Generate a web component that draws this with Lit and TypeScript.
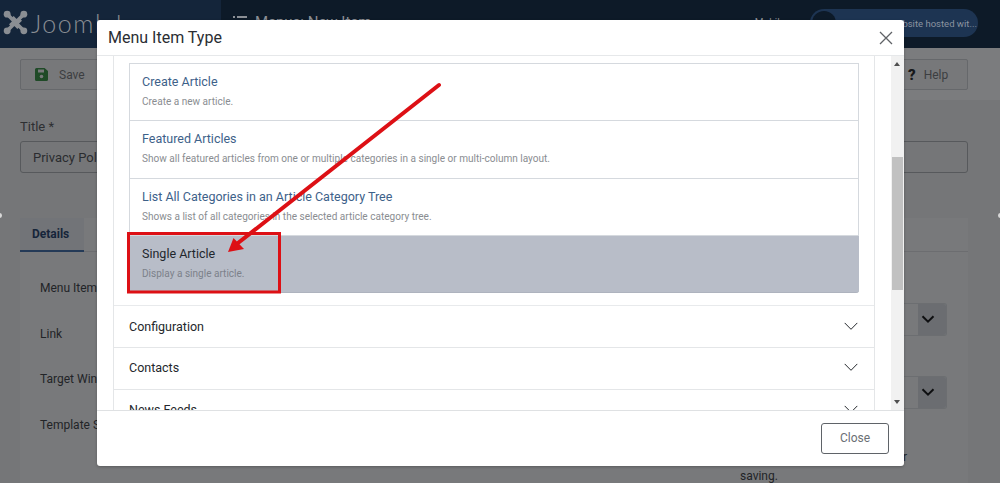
import { LitElement, html, css, svg } from "lit";
import { customElement } from "lit/decorators.js";

const chevron = svg`<svg class="chev" width="14" height="9" viewBox="0 0 14 9"><path d="M.7.9 7 7.300 13.300.9" fill="none" stroke="currentColor" stroke-width="1"/></svg>`;
const chevronBold = svg`<svg width="14" height="9" viewBox="0 0 14 9"><path d="M1.500 1.200 7 6.700l5.500-5.500" fill="none" stroke="currentColor" stroke-width="2"/></svg>`;

const logo = svg`<svg width="25" height="25" viewBox="0 0 24 24" fill="#8a8e93"><g fill="none" stroke="#8a8e93" stroke-width="3.500"><path d="M5 5l6 6-4 4"/><path d="M19 5l-6 6-4-4"/><path d="M19 19l-6-6 4-4"/><path d="M5 19l6-6 4 4"/></g><circle cx="4" cy="4" r="3.300"/><circle cx="20" cy="4" r="3.300"/><circle cx="4" cy="20" r="3.300"/><circle cx="20" cy="20" r="3.300"/></svg>`;

@customElement("app-root")
export class AppRoot extends LitElement {
  static styles = css`
    :host { display: block; width: 1000px; height: 483px; position: relative; overflow: hidden; background: #757678; font-family: Roboto, "Liberation Sans", sans-serif; color: #1d2024; }
    * { box-sizing: border-box; }
    .page { width: 1000px; height: 483px; display: flex; flex-direction: column; overflow: hidden; }
    .top { height: 48px; flex: none; display: flex; background: #0d1a28; color: #8b8f95; }
    .brand { width: 221px; background: #14253a; display: flex; align-items: flex-start; padding: 10px 0 0 3px; gap: 3px; }
    .brand span { font: 300 25px/26px Lato, Roboto, sans-serif; letter-spacing: 1.500px; color: #8a8e93; }
    .crumb { margin-left: 12px; padding-top: 14px; font-size: 15px; line-height: 16px; color: #8b8f95; flex: 1; display: flex; gap: 8px; }
    .crumb svg { margin-top: 2px; }
    .user { font-size: 10px; line-height: 12px; padding-top: 17px; margin-right: 25px; color: #8b8f95; }
    .pill { width: 168px; height: 28px; margin: 9px 22px 0 0; border-radius: 14px; background: #1d3452; display: flex; align-items: center; padding: 0 8px 0 2px; gap: 6px; font-size: 9.500px; color: #8b93a0; white-space: nowrap; }
    .pill i { width: 24px; height: 24px; border-radius: 50%; background: #0d1a28; flex: none; }
    .bar { height: 52px; flex: none; background: #7b7c7e; display: flex; align-items: flex-start; justify-content: space-between; padding: 11px 32px 0 20px; }
    .tbtn { height: 31px; border: 1px solid #66686b; border-radius: 2px; display: flex; align-items: center; gap: 11px; padding: 0 14px; font-size: 12px; color: #3c3e41; background: #77787a; }
    .tbtn.save { width: 120px; }
    .tbtn.help { width: 73px; gap: 8px; padding: 0 12px; }
    .q { font-weight: 900; font-size: 15px; color: #17181a; }
    .main { flex: 1; display: flex; flex-direction: column; padding: 19px 32px 0 20px; min-height: 0; }
    .lbl { font-size: 13px; line-height: 16px; color: #2d2f32; height: 22px; }
    .input { height: 32px; border: 1px solid #57595c; border-radius: 3px; padding: 0 12px; display: flex; align-items: center; font-size: 13px; color: #2a2c2f; flex: none; }
    .card { flex: 1; margin-top: 45px; background: #78797b; position: relative; min-height: 0; }
    .tabs { height: 34px; border-bottom: 1px solid #6c6d70; }
    .tab { width: 64px; height: 34px; border-bottom: 2px solid #243a57; padding: 9px 12px 0; font-size: 12px; font-weight: 700; color: #16253a; background: #727478; }
    .fields { display: flex; justify-content: space-between; padding: 28px 21px 0 20px; }
    .fl { font-size: 12px; line-height: 16px; height: 45.600px; color: #222427; }
    .stack { display: flex; flex-direction: column; gap: 40px; padding-top: 23px; }
    .sel { height: 33px; width: 43px; border: 1px solid #6c6e71; border-left: 0; border-radius: 0 3px 3px 0; color: #0e0f11; display: flex; justify-content: flex-end; }
    .sel span { width: 28px; background: #6b6d71; display: flex; align-items: center; justify-content: flex-start; padding-left: 3px; border-radius: 0 3px 3px 0; }
    .note { position: absolute; font-size: 12px; line-height: 18px; color: #222427; left: 720px; top: 249px; }
    .rnote { position: absolute; font-size: 12px; line-height: 18px; color: #222427; left: 883px; top: 230px; }
    .dot { position: absolute; top: 213px; width: 5px; height: 5px; border-radius: 50%; background: #d8d8d8; }
    .dot.l { left: -3px; } .dot.r { right: -3px; }

    .modal { position: absolute; left: 97px; top: 20px; width: 807px; height: 446px; background: #fff; border-radius: 3px; display: flex; flex-direction: column; overflow: hidden; box-shadow: 0 1px 3px rgba(0,0,0,.25); }
    .mh { height: 36px; flex: none; border-bottom: 1px solid #e6e8ea; display: flex; align-items: center; justify-content: space-between; padding: 0 10px 0 11px; font-size: 16px; color: #2a2e33; }
    .mb { height: 354px; flex: none; display: flex; overflow: hidden; }
    .scroll { flex: 1; padding: 0 16px; min-width: 0; overflow: hidden; }
    .acc { width: 762px; border: solid #e4e6e8; border-width: 0 1px; }
    .acc-top { padding: 7px 15px 12px 15px; border-bottom: 1px solid #e8eaec; }
    .list { border: 1px solid #d5d9de; border-width: 1px 1px 0; border-radius: 0 0 3px 3px; }
    .it { height: 57.300px; padding: 10px 12px 0; border-bottom: 1px solid #d5d9de; }
    .it b { display: block; font-weight: 400; font-size: 12.500px; line-height: 16px; color: #3d6189; }
    .it small { display: block; font-size: 10.050px; line-height: 12px; margin-top: 6px; color: #8a8d91; }
    .it.on { background: #b8bdc8; border-bottom: 1px solid #aeb3be; border-radius: 0 0 3px 3px; margin: 0 -1px; padding-left: 13px; }
    .it.on b { color: #22262c; }
    .it.on small { color: #7c818a; }
    .ac { height: 41.700px; border-bottom: 1px solid #e4e6e8; display: flex; align-items: center; justify-content: space-between; padding: 0 16px 1px 15px; font-size: 12.500px; color: #24282c; }
    .sb { width: 13px; flex: none; background: #f1f1f1; display: flex; flex-direction: column; position: relative; }
    .sb i { position: absolute; left: 1px; width: 11px; top: 101px; height: 133px; background: #c1c1c1; }
    .sb u { position: absolute; left: 3px; width: 0; height: 0; border: 3px solid transparent; }
    .sb u.up { top: 3px; border-bottom: 4px solid #505050; }
    .sb u.dn { bottom: 3px; border-top: 4px solid #505050; }
    .mf { flex: 1; border-top: 1px solid #dfe1e3; display: flex; justify-content: flex-end; padding: 12px 15px 0 0; }
    .close { width: 68px; height: 31px; border: 1px solid #5f6368; border-radius: 3px; background: #fff; display: flex; align-items: center; justify-content: center; padding-bottom: 1px; font-size: 12px; color: #6b6f74; }
    .anno { position: absolute; left: 0; top: 0; pointer-events: none; }
  `;

  render() {
    const items = [
      ["Create Article", "Create a new article."],
      ["Featured Articles", "Show all featured articles from one or multiple categories in a single or multi-column layout."],
      ["List All Categories in an Article Category Tree", "Shows a list of all categories in the selected article category tree."],
    ];
    return html`
      <div class="page">
        <div class="top">
          <div class="brand">${logo}<span>Joomla!</span></div>
          <div class="crumb">
            <svg width="14" height="12" viewBox="0 0 14 12" fill="#8b8f95"><rect x="0" y="0" width="2" height="2"/><rect x="4" y="0" width="10" height="2"/><rect x="0" y="5" width="2" height="2"/><rect x="4" y="5" width="10" height="2"/><rect x="0" y="10" width="2" height="2"/><rect x="4" y="10" width="10" height="2"/></svg>
            <span>Menus: New Item</span>
          </div>
          <div class="user">Mobile</div>
          <div class="pill"><i></i><span>You have a website hosted wit...</span></div>
        </div>
        <div class="bar">
          <div class="tbtn save">
            <svg width="13" height="13" viewBox="0 0 13 13"><path d="M0 1.500A1.500 1.500 0 0 1 1.500 0h8L13 3v8.500A1.500 1.500 0 0 1 11.500 13h-10A1.500 1.500 0 0 1 0 11.500z" fill="#1f4a27"/><rect x="3" y="1.500" width="6" height="3" fill="#77787a"/><circle cx="6.500" cy="8.500" r="1.800" fill="#77787a"/></svg>
            <span>Save</span>
          </div>
          <div class="tbtn help"><span class="q">?</span><span>Help</span></div>
        </div>
        <div class="main">
          <div class="lbl">Title *</div>
          <div class="input">Privacy Policy</div>
          <div class="card">
            <div class="tabs"><div class="tab">Details</div></div>
            <div class="fields">
              <div>
                <div class="fl">Menu Item Type</div>
                <div class="fl">Link</div>
                <div class="fl">Target Window</div>
                <div class="fl">Template Style</div>
              </div>
              <div class="stack">
                <div class="sel"><span>${chevronBold}</span></div>
                <div class="sel"><span>${chevronBold}</span></div>
              </div>
            </div>
            <div class="rnote">r</div>
            <div class="note">saving.</div>
          </div>
        </div>
      </div>
      <div class="dot l"></div><div class="dot r"></div>

      <div class="modal">
        <div class="mh">
          <span>Menu Item Type</span>
          <svg width="16" height="16" viewBox="0 0 16 16"><path d="M2 2l12 12M14 2 2 14" stroke="#5f6266" stroke-width="1.300" fill="none"/></svg>
        </div>
        <div class="mb">
          <div class="scroll">
            <div class="acc">
              <div class="acc-top">
                <div class="list">
                  ${items.map(([t, d]) => html`<div class="it"><b>${t}</b><small>${d}</small></div>`)}
                  <div class="it on"><b>Single Article</b><small>Display a single article.</small></div>
                </div>
              </div>
              ${["Configuration", "Contacts", "News Feeds"].map((t) => html`<div class="ac"><span>${t}</span>${chevron}</div>`)}
            </div>
          </div>
          <div class="sb"><u class="up"></u><i></i><u class="dn"></u></div>
        </div>
        <div class="mf"><div class="close">Close</div></div>
      </div>

      <svg class="anno" width="1000" height="483" viewBox="0 0 1000 483">
        <rect x="128.500" y="233.500" width="151" height="58.500" fill="none" stroke="#dd1015" stroke-width="3"/>
        <path d="M439 85 238 243" stroke="#dd1015" stroke-width="4" stroke-linecap="round" fill="none"/>
        <path d="M228 252 233.500 238 244 249z" fill="#dd1015"/>
      </svg>
    `;
  }
}
